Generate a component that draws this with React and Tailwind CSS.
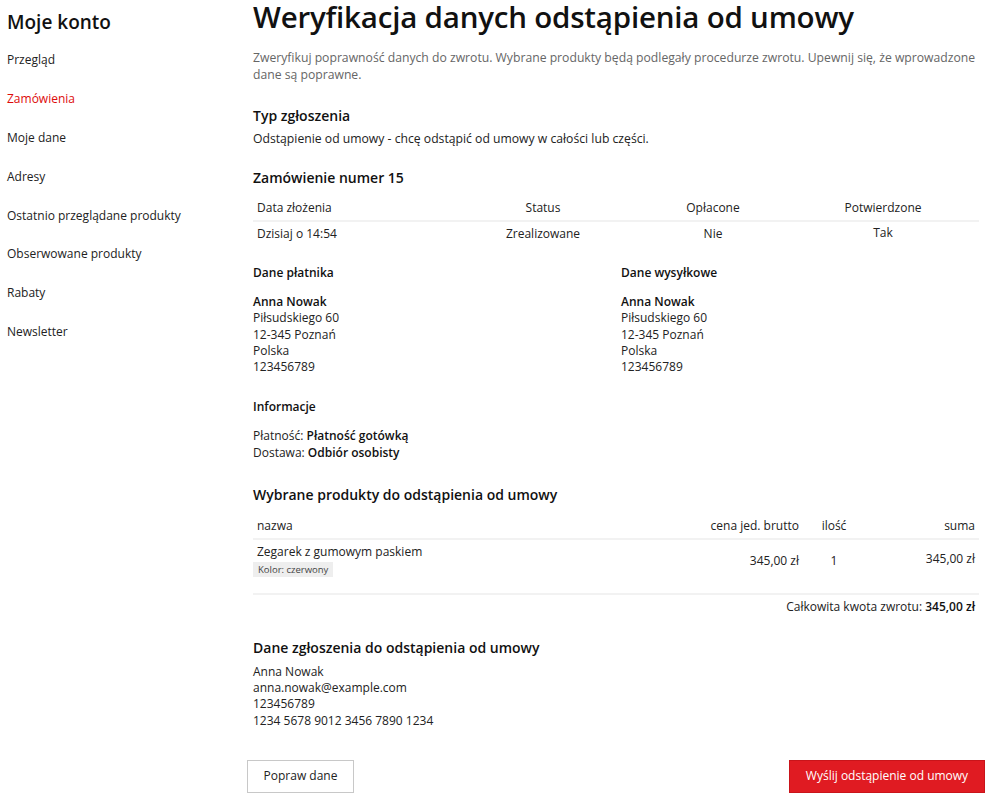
const navItems = [
  'Przegląd',
  'Zamówienia',
  'Moje dane',
  'Adresy',
  'Ostatnio przeglądane produkty',
  'Obserwowane produkty',
  'Rabaty',
  'Newsletter',
];

function Sidebar() {
  return (
    <aside className="w-[247px] shrink-0 pl-[7px] pt-[9px]">
      <h2 className="text-[19px] font-semibold leading-[26px] text-[#111]">Moje konto</h2>
      <nav className="mt-[6px] flex flex-col">
        {navItems.map((item) => (
          <a
            key={item}
            href="#"
            className={`h-[38.8px] flex items-center text-[12px] ${
              item === 'Zamówienia' ? 'text-[#dd0a0a]' : 'text-[#222]'
            }`}
          >
            {item}
          </a>
        ))}
      </nav>
    </aside>
  );
}

function Address({ title }) {
  return (
    <div>
      <h4 className="text-[12px] font-semibold leading-[16px] text-[#111]">{title}</h4>
      <div className="mt-[13px] text-[12px] leading-[16.3px] text-[#222]">
        <div className="font-semibold text-[#111]">Anna Nowak</div>
        <div>Piłsudskiego 60</div>
        <div>12-345 Poznań</div>
        <div>Polska</div>
        <div>123456789</div>
      </div>
    </div>
  );
}

export default function App() {
  return (
    <div
      className="flex min-h-[798px] bg-white text-[#222]"
      style={{ fontFamily: '"Open Sans", "Noto Sans", sans-serif' }}
    >
      <Sidebar />
      <main className="w-[738px] pb-[6px]">
        <div className="px-[6px]">
          <h1 className="text-[29.5px] font-semibold leading-[34px] text-[#111] tracking-[-0.2px]">
            Weryfikacja danych odstąpienia od umowy
          </h1>
          <p className="mt-[15px] text-[12.2px] leading-[17px] text-[#666]">
            Zweryfikuj poprawność danych do zwrotu. Wybrane produkty będą podlegały procedurze zwrotu. Upewnij się, że
            wprowadzone dane są poprawne.
          </p>

          <h3 className="mt-[23px] text-[14px] font-semibold leading-[20px] text-[#111]">Typ zgłoszenia</h3>
          <p className="mt-[4px] text-[12.2px] leading-[17px]">
            Odstąpienie od umowy - chcę odstąpić od umowy w całości lub części.
          </p>

          <h3 className="mt-[21px] text-[14px] font-semibold leading-[20px] text-[#111]">Zamówienie numer 15</h3>
          <div className="mt-[8px] text-[12px]">
            <div className="grid grid-cols-[205px_170px_170px_170px] h-[26px] items-center border-b-2 border-[#f2f2f2]">
              <div className="pl-[4px]">Data złożenia</div>
              <div className="text-center">Status</div>
              <div className="text-center">Opłacone</div>
              <div className="text-center">Potwierdzone</div>
            </div>
            <div className="grid grid-cols-[205px_170px_170px_170px] h-[24px] items-center">
              <div className="pl-[4px]">Dzisiaj o 14:54</div>
              <div className="text-center">Zrealizowane</div>
              <div className="text-center">Nie</div>
              <div className="text-center -mt-[2px]">Tak</div>
            </div>
          </div>

          <div className="mt-[19px] grid grid-cols-[368px_1fr]">
            <Address title="Dane płatnika" />
            <Address title="Dane wysyłkowe" />
          </div>

          <h4 className="mt-[24px] text-[12px] font-semibold leading-[16px] text-[#111]">Informacje</h4>
          <div className="mt-[13px] text-[12px] leading-[16.3px]">
            <div>
              Płatność: <span className="font-semibold text-[#111]">Płatność gotówką</span>
            </div>
            <div>
              Dostawa: <span className="font-semibold text-[#111]">Odbiór osobisty</span>
            </div>
          </div>

          <h3 className="mt-[24px] text-[14px] font-semibold leading-[20px] text-[#111]">
            Wybrane produkty do odstąpienia od umowy
          </h3>
          <div className="mt-[9px] text-[12px]">
            <div className="grid grid-cols-[1fr_140px_70px_110px] h-[26px] items-center border-b-2 border-[#f2f2f2]">
              <div className="pl-[4px]">nazwa</div>
              <div className="text-right">cena jed. brutto</div>
              <div className="text-center">ilość</div>
              <div className="text-right pr-[4px]">suma</div>
            </div>
            <div className="grid grid-cols-[1fr_140px_70px_110px] h-[55px] items-start border-b-2 border-[#f2f2f2] pt-[4px]">
              <div className="pl-[4px]">
                <div className="leading-[16px]">Zegarek z gumowym paskiem</div>
                <span className="mt-[2px] inline-block bg-[#eeeeee] px-[5px] py-[1px] text-[9.5px] leading-[13px] text-[#444] -ml-[4px]">
                  Kolor: czerwony
                </span>
              </div>
              <div className="text-right pt-[8px]">345,00 zł</div>
              <div className="text-center pt-[8px]">1</div>
              <div className="text-right pr-[4px] pt-[6px]">345,00 zł</div>
            </div>
            <div className="mt-[4px] text-right pr-[4px] leading-[16px]">
              Całkowita kwota zwrotu: <span className="font-semibold text-[#111]">345,00 zł</span>
            </div>
          </div>

          <h3 className="mt-[23px] text-[14px] font-semibold leading-[20px] text-[#111]">
            Dane zgłoszenia do odstąpienia od umowy
          </h3>
          <div className="mt-[6px] text-[12px] leading-[16.2px]">
            <div>Anna Nowak</div>
            <div>anna.nowak@example.com</div>
            <div>123456789</div>
            <div>1234 5678 9012 3456 7890 1234</div>
          </div>
        </div>

        <div className="mt-[31px] flex items-center justify-between">
          <button className="h-[33px] w-[107px] border border-[#c8c8c8] bg-white text-[12px] text-[#222]">
            Popraw dane
          </button>
          <button className="h-[33px] w-[196px] border border-[#c9141a] bg-[#e01b22] text-[12px] font-medium text-white">
            Wyślij odstąpienie od umowy
          </button>
        </div>
      </main>
    </div>
  );
}
